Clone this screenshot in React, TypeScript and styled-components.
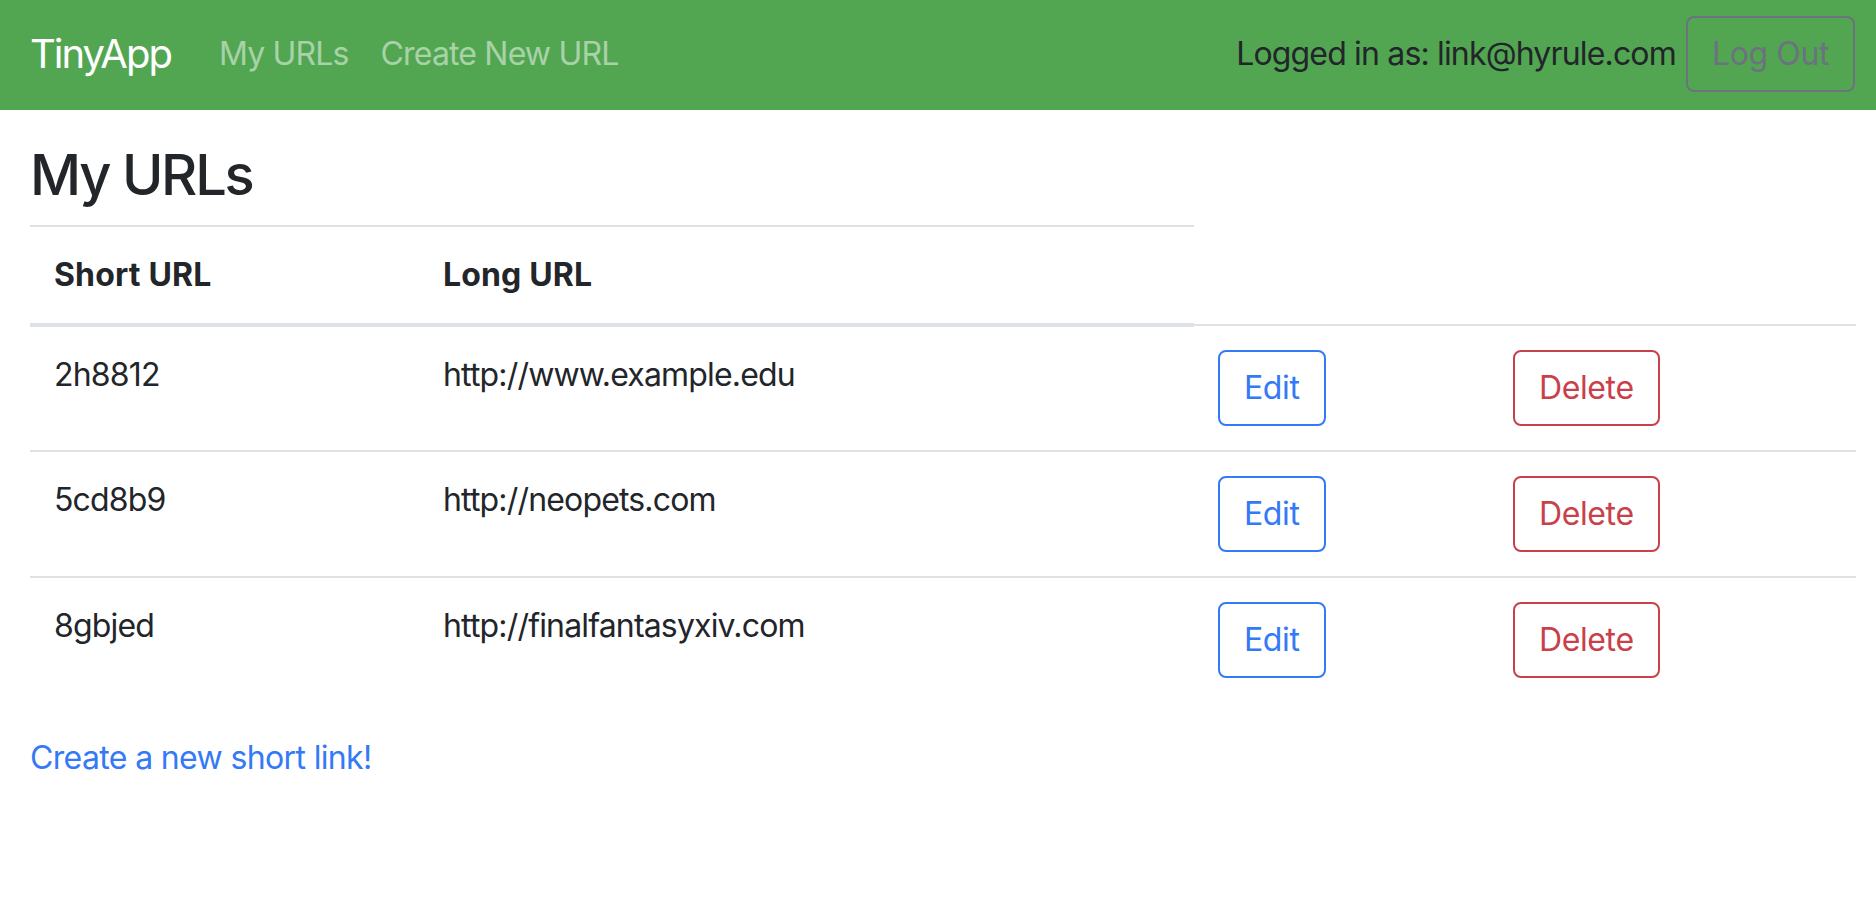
import React from "react";
import styled, { createGlobalStyle } from "styled-components";

const GlobalStyle = createGlobalStyle`
  html, body {
    margin: 0;
    padding: 0;
    background: #ffffff;
  }
  body {
    font-family: Inter, "Noto Sans", "Liberation Sans", sans-serif;
    font-size: 32px;
    line-height: 1.5;
    letter-spacing: -0.026em;
    color: #222529;
  }
  * { box-sizing: border-box; }
`;

const Page = styled.div`
  min-height: 898px;
  background: #ffffff;
`;

const NavBar = styled.nav`
  height: 110px;
  background: #52a652;
  display: flex;
  align-items: center;
  padding: 0 21px 2px 30px;
`;

const Brand = styled.a`
  font-size: 40px;
  line-height: 60px;
  letter-spacing: -0.05em;
  color: #ffffff;
  text-decoration: none;
  margin-right: 32px;
`;

const NavLinks = styled.div`
  display: flex;
  align-items: center;
  flex: 1;
`;

const NavLink = styled.a`
  font-size: 32px;
  line-height: 48px;
  padding: 0 16px;
  color: rgba(255, 255, 255, 0.5);
  text-decoration: none;
`;

const NavRight = styled.div`
  display: flex;
  align-items: center;
  gap: 10px;
`;

const UserText = styled.span`
  font-size: 32px;
  line-height: 48px;
  color: #222529;
`;

type Variant = "primary" | "danger" | "secondary";

const variantColor: Record<Variant, string> = {
  primary: "#3479f6",
  danger: "#c9404a",
  secondary: "#6c7280",
};

const OutlineButton = styled.button<{ $variant: Variant }>`
  display: inline-block;
  font-family: inherit;
  font-size: 32px;
  line-height: 48px;
  letter-spacing: -0.012em;
  font-weight: 400;
  padding: 12px 24px;
  background: transparent;
  border: 2px solid ${(p) => variantColor[p.$variant]};
  color: ${(p) => variantColor[p.$variant]};
  border-radius: 8px;
  cursor: pointer;
`;

const Main = styled.main`
  padding: 32px 20px 0 30px;
`;

const Title = styled.h1`
  margin: 0 0 16px;
  font-size: 56px;
  line-height: 1.2;
  font-weight: 500;
  letter-spacing: -0.04em;
  color: #222529;
`;

const Table = styled.table`
  width: 100%;
  border-collapse: collapse;
  table-layout: fixed;
  margin-bottom: 32px;
`;

const Col = styled.col<{ $w: number }>`
  width: ${(p) => p.$w}px;
`;

const Th = styled.th`
  text-align: left;
  vertical-align: bottom;
  font-weight: 700;
  font-size: 32px;
  line-height: 48px;
  letter-spacing: 0.005em;
  padding: 24px;
  border-top: 2px solid #dee2e6;
  border-bottom: 4px solid #dee2e6;
`;

const Td = styled.td`
  vertical-align: top;
  font-size: 32px;
  line-height: 48px;
  padding: 24px;
  border-top: 2px solid #dee2e6;
`;

const CreateLink = styled.a`
  display: inline-block;
  font-size: 32px;
  line-height: 48px;
  letter-spacing: -0.02em;
  color: #3479f6;
  text-decoration: none;
`;

const urls = [
  { short: "2h8812", long: "http://www.example.edu" },
  { short: "5cd8b9", long: "http://neopets.com" },
  { short: "8gbjed", long: "http://finalfantasyxiv.com" },
];

export default function App() {
  return (
    <Page>
      <GlobalStyle />
      <NavBar>
        <Brand href="#">TinyApp</Brand>
        <NavLinks>
          <NavLink href="#">My URLs</NavLink>
          <NavLink href="#">Create New URL</NavLink>
        </NavLinks>
        <NavRight>
          <UserText>Logged in as: link@hyrule.com</UserText>
          <OutlineButton $variant="secondary">Log Out</OutlineButton>
        </NavRight>
      </NavBar>
      <Main>
        <Title>My URLs</Title>
        <Table>
          <colgroup>
            <Col $w={389} />
            <Col $w={775} />
            <Col $w={295} />
            <Col $w={367} />
          </colgroup>
          <thead>
            <tr>
              <Th>Short URL</Th>
              <Th>Long URL</Th>
            </tr>
          </thead>
          <tbody>
            {urls.map((u) => (
              <tr key={u.short}>
                <Td>{u.short}</Td>
                <Td>{u.long}</Td>
                <Td>
                  <OutlineButton $variant="primary">Edit</OutlineButton>
                </Td>
                <Td>
                  <OutlineButton $variant="danger">Delete</OutlineButton>
                </Td>
              </tr>
            ))}
          </tbody>
        </Table>
        <CreateLink href="#">Create a new short link!</CreateLink>
      </Main>
    </Page>
  );
}
